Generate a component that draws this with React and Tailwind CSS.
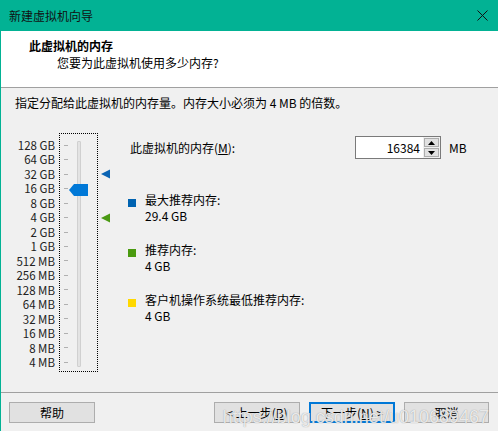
import React from 'react';

const labels = ['128 GB', '64 GB', '32 GB', '16 GB', '8 GB', '4 GB', '2 GB', '1 GB', '512 MB', '256 MB', '128 MB', '64 MB', '32 MB', '16 MB', '8 MB', '4 MB'];

function Tri({ color }) {
  return (
    <svg width="10" height="10" viewBox="0 0 10 10">
      <path d="M0 5 L9 0.5 L9 9.5 Z" fill={color} />
    </svg>
  );
}

function Info({ color, title, value }) {
  return (
    <div className="flex items-start">
      <div className={`w-[8px] h-[8px] mt-[7px] ${color}`} />
      <div className="ml-[9px] leading-[16px]">
        <div>{title}</div>
        <div>{value}</div>
      </div>
    </div>
  );
}

export default function App() {
  return (
    <div
      className="relative w-[498px] h-[431px] flex flex-col bg-[#f0f0f0] text-[12px] text-black overflow-hidden"
      style={{ fontFamily: '"Noto Sans CJK SC", "Noto Sans", sans-serif' }}
    >
      {/* Title bar */}
      <div className="h-[31px] bg-[#02b294] flex items-center justify-between pl-[9px] pr-[10px] shrink-0">
        <span className="text-[12px] text-[#111]">新建虚拟机向导</span>
        <svg width="11" height="11" viewBox="0 0 11 11">
          <path d="M0.5 0.5 L10.5 10.5 M10.5 0.5 L0.5 10.5" stroke="#111" strokeWidth="1" />
        </svg>
      </div>

      <div className="flex-1 flex flex-col border-l border-[#02b294]">
        {/* Header */}
        <div className="h-[57px] bg-white border-b border-[#a0a0a0] shrink-0 pt-[7px] leading-[16px]">
          <div className="pl-[28px] font-bold">此虚拟机的内存</div>
          <div className="pl-[56px] mt-[1px]">您要为此虚拟机使用多少内存?</div>
        </div>

        {/* Content */}
        <div className="flex-1 pt-[7px]">
          <div className="pl-[14px] leading-[16px]">指定分配给此虚拟机的内存量。内存大小必须为 4 MB 的倍数。</div>

          <div className="flex mt-[22px]">
            {/* Labels */}
            <div className="w-[54px] pt-[5px] flex flex-col items-end text-right">
              {labels.map((l) => (
                <div key={l} className="h-[14.47px] leading-[14.47px] whitespace-nowrap text-[11.5px] text-[#222]">
                  {l}
                </div>
              ))}
            </div>

            {/* Slider box */}
            <div className="relative ml-[4px] w-[39px] h-[239px] border border-dotted border-black pt-[4px]">
              <div className="absolute left-[17px] top-[7px] w-[4px] h-[226px] bg-[#e3e3e3] border border-[#d0d0d0] rounded-[1px]" />
              {labels.map((l) => (
                <div key={l} className="h-[14.47px] flex items-center pl-[4px]">
                  <div className="w-[4px] h-[1px] bg-[#b0b0b0]" />
                </div>
              ))}
              <svg className="absolute left-[9px] top-[50px]" width="20" height="12" viewBox="0 0 20 12">
                <path d="M0 6 L5 0 L19 0 L19 12 L5 12 Z" fill="#0078d7" />
              </svg>
            </div>

            {/* Markers */}
            <div className="ml-[3px] w-[10px] pt-[5px] flex flex-col">
              {labels.map((l, i) => (
                <div key={l} className="h-[14.47px] flex items-center">
                  {i === 2 && <Tri color="#0a64b4" />}
                  {i === 5 && <Tri color="#4b9a13" />}
                </div>
              ))}
            </div>

            {/* Right column */}
            <div className="ml-[17px] flex flex-col">
              <div className="flex items-center mt-[3px] h-[23px]">
                <div className="w-[227px] pl-[2px]">
                  此虚拟机的内存(<span className="underline">M</span>):
                </div>
                <div className="flex h-[23px] border border-[#7a7a7a] bg-white">
                  <div className="w-[67px] flex items-center justify-end pr-[3px]">16384</div>
                  <div className="w-[17px] flex flex-col bg-[#f0f0f0] p-[1px] gap-[1px]">
                    <div className="flex-1 bg-[#e1e1e1] border border-[#adadad] flex items-center justify-center">
                      <svg width="7" height="4" viewBox="0 0 7 4"><path d="M0 4 L3.5 0 L7 4 Z" fill="#000" /></svg>
                    </div>
                    <div className="flex-1 bg-[#e1e1e1] border border-[#adadad] flex items-center justify-center">
                      <svg width="7" height="4" viewBox="0 0 7 4"><path d="M0 0 L3.5 4 L7 0 Z" fill="#000" /></svg>
                    </div>
                  </div>
                </div>
                <div className="ml-[8px]">MB</div>
              </div>

              <div className="mt-[33px] flex flex-col gap-[18px]">
                <Info color="bg-[#0063b1]" title="最大推荐内存:" value="29.4 GB" />
                <Info color="bg-[#4a9a0f]" title="推荐内存:" value="4 GB" />
                <Info color="bg-[#ffd800]" title="客户机操作系统最低推荐内存:" value="4 GB" />
              </div>
            </div>
          </div>
        </div>

        {/* Footer */}
        <div className="h-[39px] shrink-0 border-t border-[#a0a0a0] flex items-start pt-[9px] pl-[8px] pr-[9px]">
          <button className="w-[86px] h-[21px] bg-[#e1e1e1] border border-[#adadad] flex items-center justify-center">帮助</button>
          <div className="flex-1" />
          <button className="w-[86px] h-[21px] bg-[#e1e1e1] border border-[#adadad] flex items-center justify-center">
            &lt; 上一步(<span className="underline">B</span>)
          </button>
          <button className="ml-[9px] w-[86px] h-[21px] bg-[#e1e1e1] border-2 border-[#0078d7] flex items-center justify-center">
            下一步(<span className="underline">N</span>) &gt;
          </button>
          <button className="ml-[9px] w-[85px] h-[21px] bg-[#e1e1e1] border border-[#adadad] flex items-center justify-center">取消</button>
        </div>
      </div>

      {/* Watermark */}
      <div
        className="absolute right-[9px] bottom-[3px] text-[18px] leading-[22px] text-white/80 pointer-events-none whitespace-nowrap"
        style={{ fontFamily: '"Liberation Sans", sans-serif', textShadow: '0 0 1px rgba(110,110,110,0.8)' }}
      >
        https://blog.csdn.net/u010689467
      </div>
    </div>
  );
}
